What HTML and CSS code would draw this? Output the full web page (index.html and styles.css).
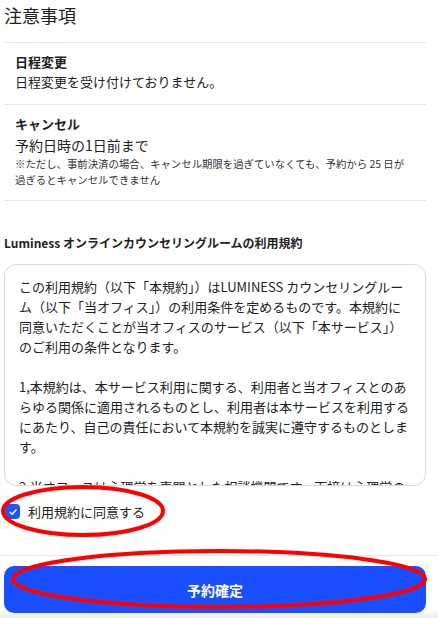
FILE: index.html
```html
<!DOCTYPE html>
<html lang="ja">
<head>
    <meta charset="UTF-8">
    <meta name="viewport" content="width=device-width, initial-scale=1.0">
    <title>予約確認</title>
    <link rel="stylesheet" href="styles.css">
</head>
<body>
    <div class="page">
        <h2 class="title">注意事項</h2>
        <div class="notes">
            <div class="note">
                <div class="note-head">日程変更</div>
                <div class="note-body">日程変更を受け付けておりません。</div>
            </div>
            <div class="note">
                <div class="note-head">キャンセル</div>
                <div class="note-body">予約日時の1日前まで</div>
                <div class="note-small">※ただし、事前決済の場合、キャンセル期限を過ぎていなくても、予約から 25 日が<br>過ぎるとキャンセルできません</div>
            </div>
        </div>

        <div class="terms">
            <h3 class="terms-title">Luminess オンラインカウンセリングルームの利用規約</h3>
            <div class="terms-box">
                <p>この利用規約（以下「本規約」）はLUMINESS カウンセリングルーム（以下「当オフィス」）の利用条件を定めるものです。本規約に同意いただくことが当オフィスのサービス（以下「本サービス」）のご利用の条件となります。</p>
                <p>1,本規約は、本サービス利用に関する、利用者と当オフィスとのあらゆる関係に適用されるものとし、利用者は本サービスを利用するにあたり、自己の責任において本規約を誠実に遵守するものとします。</p>
                <p>2,当オフィスは心理学を専門とした相談機関です。面接は心理学の知見に基づいて行います。</p>
            </div>
            <label class="agree">
                <span class="check">
                    <svg width="10" height="10" viewBox="0 0 10 10"><path d="M2 5.2 L4.2 7.3 L8.2 2.8" fill="none" stroke="#fff" stroke-width="1.4" stroke-linecap="round" stroke-linejoin="round"/></svg>
                </span>
                利用規約に同意する
            </label>
        </div>

        <div class="footer">
            <button class="submit">予約確定</button>
        </div>

        <svg class="marks" width="438" height="618" viewBox="0 0 438 618">
            <ellipse cx="83" cy="511" rx="80" ry="24" fill="none" stroke="#ff0000" stroke-width="4"/>
            <ellipse cx="219" cy="579" rx="206" ry="28" fill="none" stroke="#ff0000" stroke-width="4"/>
        </svg>
    </div>
</body>
</html>
```

FILE: styles.css
```css
* {
    box-sizing: border-box;
}
body {
    margin: 0;
    font-family: "Noto Sans CJK JP", "Noto Sans", sans-serif;
    color: #222;
    background: #fff;
}
.page {
    position: relative;
    width: 438px;
    height: 618px;
    overflow: hidden;
}
.title {
    margin: 0;
    padding: 3px 4px 0;
    height: 42px;
    font-size: 18px;
    font-weight: normal;
    line-height: 24px;
}
.notes {
    margin: 0 12px 0 4px;
    border-top: 1px solid #e6e6e6;
}
.note {
    padding: 9px 10px 12px 11px;
    border-bottom: 1px solid #e6e6e6;
}
.note-head {
    font-size: 13px;
    font-weight: bold;
    line-height: 20px;
}
.note-body {
    font-size: 13px;
    line-height: 20px;
}
.note-small {
    font-size: 10.4px;
    line-height: 16px;
    color: #333;
}
.note:last-child .note-body {
    font-size: 14px;
    line-height: 22px;
}
.terms {
    padding: 33px 12px 0 4px;
}
.terms-title {
    margin: 0 0 12px;
    font-size: 12px;
    font-weight: bold;
    line-height: 18px;
}
.terms-box {
    height: 222px;
    overflow: hidden;
    border: 1px solid #d9d9d9;
    border-radius: 12px;
    padding: 12px 12px 0 14px;
    font-size: 13px;
    line-height: 20px;
}
.terms-box p {
    margin: 0 0 20px;
}
.agree {
    display: flex;
    align-items: center;
    gap: 8px;
    margin-top: 16px;
    padding-left: 1px;
    font-size: 13px;
}
.check {
    display: flex;
    align-items: center;
    justify-content: center;
    width: 15px;
    height: 15px;
    border-radius: 4px;
    background: #1a55ff;
}
.footer {
    margin-top: 34px;
    border-top: 1px solid #e6e6e6;
    padding: 10px 12px 5px 4px;
    background: linear-gradient(to bottom, #fff 85%, #ececec);
}
.submit {
    display: block;
    width: 100%;
    height: 47px;
    border: none;
    border-radius: 10px;
    background: #1a4fff;
    color: #fff;
    font-family: inherit;
    font-size: 14px;
    font-weight: bold;
}
.marks {
    position: absolute;
    top: 0;
    left: 0;
    pointer-events: none;
}
```
